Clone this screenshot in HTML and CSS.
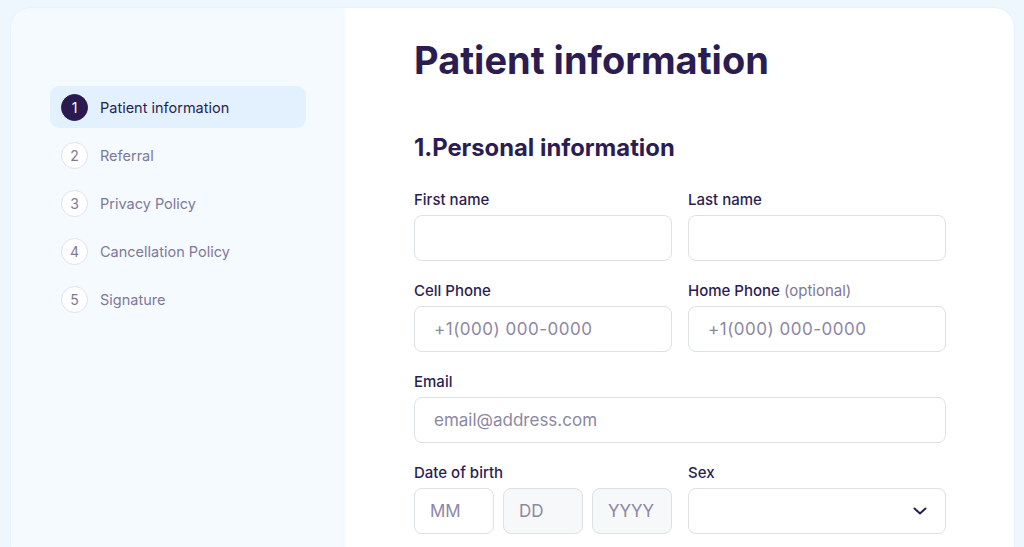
FILE: index.html
```html
<!DOCTYPE html>
<html lang="en">
<head>
<meta charset="utf-8">
<title>Patient information</title>
<link rel="stylesheet" href="styles.css">
</head>
<body>
<div class="card">
  <aside class="sidebar">
    <ol class="steps">
      <li class="step active"><span class="num">1</span><span class="label">Patient information</span></li>
      <li class="step"><span class="num">2</span><span class="label">Referral</span></li>
      <li class="step"><span class="num">3</span><span class="label">Privacy Policy</span></li>
      <li class="step"><span class="num">4</span><span class="label">Cancellation Policy</span></li>
      <li class="step"><span class="num">5</span><span class="label">Signature</span></li>
    </ol>
  </aside>
  <main class="main">
    <h1 class="title">Patient information</h1>
    <h2 class="section">1.Personal information</h2>
    <div class="grid">
      <div class="field">
        <label class="flabel">First name</label>
        <div class="input"></div>
      </div>
      <div class="field">
        <label class="flabel">Last name</label>
        <div class="input"></div>
      </div>
      <div class="field">
        <label class="flabel">Cell Phone</label>
        <div class="input"><span class="ph phone">+1(000) 000-0000</span></div>
      </div>
      <div class="field">
        <label class="flabel">Home Phone <span class="opt">(optional)</span></label>
        <div class="input"><span class="ph phone">+1(000) 000-0000</span></div>
      </div>
      <div class="field wide">
        <label class="flabel">Email</label>
        <div class="input"><span class="ph">email@address.com</span></div>
      </div>
      <div class="field">
        <label class="flabel">Date of birth</label>
        <div class="dob">
          <div class="input small"><span class="ph">MM</span></div>
          <div class="input small disabled"><span class="ph">DD</span></div>
          <div class="input small disabled"><span class="ph">YYYY</span></div>
        </div>
      </div>
      <div class="field">
        <label class="flabel">Sex</label>
        <div class="input select">
          <svg class="chev" width="14" height="8" viewBox="0 0 14 8"><path d="M1.5 1.5 L7 6.5 L12.5 1.5" fill="none" stroke="#2b1d52" stroke-width="2" stroke-linecap="round" stroke-linejoin="round"/></svg>
        </div>
      </div>
    </div>
  </main>
</div>
</body>
</html>
```
FILE: styles.css
```css
* { box-sizing: border-box; }
html, body { margin: 0; padding: 0; }
body {
  background: #eef6fe;
  font-family: Inter, "Noto Sans", sans-serif;
  color: #2b1d52;
  height: 547px;
  overflow: hidden;
  padding: 8px 10px 0 11px;
}
.card {
  display: flex;
  height: 539px;
  border-radius: 20px 20px 0 0;
  overflow: hidden;
  background: #fff;
  box-shadow: 0 0 2px rgba(40, 60, 100, 0.08);
}
.sidebar {
  width: 334px;
  flex: none;
  background: #f5faff;
  padding: 78px 39px 0 39px;
}
.steps {
  list-style: none;
  margin: 0;
  padding: 0;
  display: flex;
  flex-direction: column;
  gap: 6px;
}
.step {
  display: flex;
  align-items: center;
  height: 42px;
  padding: 0 11px;
  border-radius: 9px;
  font-size: 14.5px;
  color: #7f7899;
}
.step.active {
  background: #e3f1fe;
  color: #2b1d52;
}
.num {
  width: 27px;
  height: 27px;
  border-radius: 50%;
  border: 1px solid #dfe3e9;
  background: #fff;
  display: flex;
  align-items: center;
  justify-content: center;
  font-size: 14px;
  color: #7f7899;
  margin-right: 12px;
}
.step.active .num {
  background: #2b1a4f;
  border-color: #2b1a4f;
  color: #fff;
}
.main {
  flex: 1;
  padding: 30px 0 0 69px;
}
.title {
  margin: 0;
  font-size: 38px;
  font-weight: 700;
  line-height: 44px;
  color: #2b1d52;
}
.section {
  margin: 51px 0 0 0;
  font-size: 23.8px;
  font-weight: 700;
  line-height: 30px;
  color: #2b1d52;
}
.grid {
  margin-top: 28px;
  width: 532px;
  display: grid;
  grid-template-columns: 258px 258px;
  column-gap: 16px;
  row-gap: 21px;
}
.field { display: flex; flex-direction: column; }
.field.wide { grid-column: 1 / span 2; }
.flabel {
  font-size: 15px;
  font-weight: 500;
  line-height: 18px;
  margin-bottom: 6px;
  color: #2b1d52;
}
.opt { color: #7f7899; font-weight: 400; }
.input {
  height: 46px;
  border: 1px solid #dbe1e6;
  border-radius: 8px;
  background: #fff;
  display: flex;
  align-items: center;
  padding: 0 19px;
}
.ph {
  font-size: 17px;
  color: #8d87a3;
}
.ph.phone { letter-spacing: 0.5px; }
.dob {
  display: grid;
  grid-template-columns: 80px 80px 80px;
  column-gap: 9px;
}
.input.small { padding: 0 15px; }
.input.disabled { background: #f7f8fa; }
.input.select { justify-content: flex-end; padding-right: 18px; }
.chev { display: block; }
```
